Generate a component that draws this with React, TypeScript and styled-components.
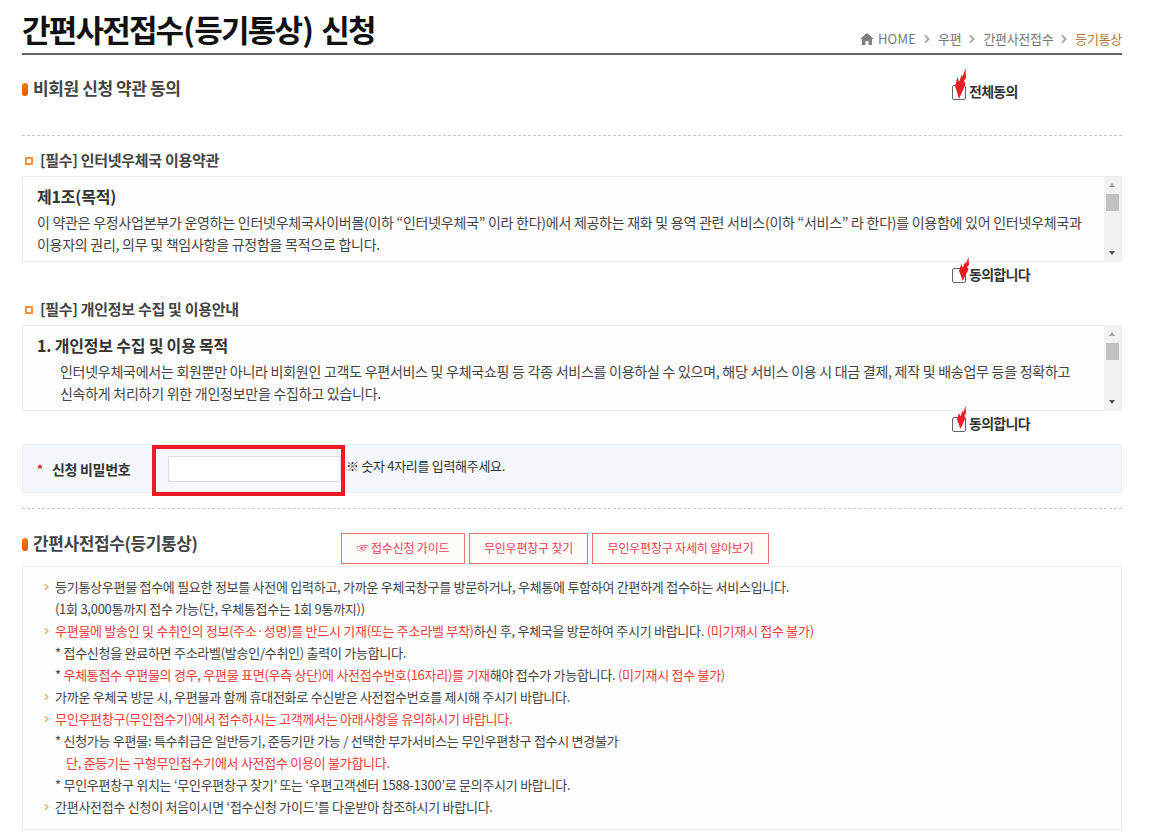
import React from "react";
import styled, { createGlobalStyle } from "styled-components";

const Global = createGlobalStyle`
  html, body { margin: 0; padding: 0; background: #fff; overflow: hidden; }
  body { font-family: "Noto Sans CJK KR", "Noto Sans", sans-serif; color: #444; word-break: keep-all; }
`;
const Page = styled.div`
  width: 1100px;
  margin-left: 22px;
  height: 838px;
  overflow: hidden;
`;
const Header = styled.header`
  height: 53px;
  border-bottom: 2px solid #666;
  display: flex;
  justify-content: space-between;
  align-items: flex-start;
`;
const Title = styled.h1`
  margin: 7px 0 0;
  font-size: 31px;
  line-height: 44px;
  font-weight: 700;
  letter-spacing: -1.8px;
  word-spacing: 3px;
  color: #111;
`;
const Paren = styled.span`
  padding: 0 1px;
`;
const Crumbs = styled.nav`
  margin-top: 29px;
  display: flex;
  align-items: center;
  font-size: 13px;
  line-height: 20px;
  letter-spacing: -0.3px;
  color: #777;
`;
const HomeText = styled.span`
  letter-spacing: 0.2px;
`;
const CrumbSep = styled.span`
  margin: 0 8px 0 8px;
  width: 6px;
  height: 8px;
  display: inline-flex;
`;
const Current = styled.span`
  color: #b5773c;
`;
const SectionRow = styled.div`
  height: 40px;
  margin-top: 21px;
  display: flex;
  position: relative;
`;
const SectionTitle = styled.h2<{ $top?: number }>`
  margin: ${(p) => p.$top ?? 0}px 0 0;
  padding-left: 11px;
  position: relative;
  font-size: 17px;
  line-height: 24px;
  font-weight: 700;
  letter-spacing: -0.4px;
  color: #444;
  white-space: nowrap;
  &::before {
    content: "";
    position: absolute;
    left: 0;
    top: 7px;
    width: 6px;
    height: 13px;
    border-radius: 3px;
    background: linear-gradient(#f57c00, #e25a00);
  }
`;
const Agree = styled.label<{ $top: number }>`
  position: absolute;
  left: 930px;
  top: ${(p) => p.$top}px;
  display: flex;
  align-items: flex-start;
  font-size: 14px;
  font-weight: 700;
  letter-spacing: -0.7px;
  color: #333;
  line-height: 13px;
`;
const Check = styled.span`
  display: block;
  width: 12px;
  height: 13px;
  border: 1px solid #666;
  border-radius: 2px;
  background: #fff;
  margin-right: 3px;
  position: relative;
`;
const Flame = styled.svg<{ $left: number; $top: number; $w: number; $h: number }>`
  position: absolute;
  left: ${(p) => p.$left}px;
  top: ${(p) => p.$top}px;
  width: ${(p) => p.$w}px;
  height: ${(p) => p.$h}px;
`;
const Dotted = styled.hr<{ $top: number }>`
  margin: ${(p) => p.$top}px 0 0;
  border: 0;
  border-top: 1px dashed #c8c8c8;
`;
const SubTitle = styled.h3<{ $top: number }>`
  margin: ${(p) => p.$top}px 0 0;
  padding-left: 18px;
  position: relative;
  font-size: 15px;
  line-height: 20px;
  font-weight: 700;
  letter-spacing: -0.3px;
  color: #444;
  &::before {
    content: "";
    position: absolute;
    left: 3px;
    top: 7px;
    width: 4px;
    height: 4px;
    border: 2px solid #f5923e;
  }
`;
const TermsBox = styled.div`
  margin-top: 6px;
  height: 84px;
  border: 1px solid #eee;
  background: #fdfdfd;
  display: flex;
`;
const TermsText = styled.div`
  flex: 1;
  padding: 7px 0 0 14px;
  overflow: hidden;
  font-size: 14px;
  line-height: 22px;
  letter-spacing: -0.26px;
  color: #444;
`;
const TermsHead = styled.div`
  margin-bottom: 3px;
  font-size: 16px;
  line-height: 24px;
  font-weight: 700;
  letter-spacing: -0.2px;
  color: #333;
`;
const Indent = styled.div`
  padding-left: 23px;
`;
const Scrollbar = styled.div`
  width: 17px;
  background: #f1f1f1;
  position: relative;
  flex: none;
`;
const Thumb = styled.div`
  position: absolute;
  left: 2px;
  right: 2px;
  top: 17px;
  height: 17px;
  background: #c1c1c1;
`;
const ArrowUp = styled.div`
  position: absolute;
  left: 5px;
  top: 6px;
  width: 0;
  height: 0;
  border: 3.5px solid transparent;
  border-top: 0;
  border-bottom: 4px solid #a3a3a3;
`;
const ArrowDown = styled.div`
  position: absolute;
  left: 5px;
  bottom: 6px;
  width: 0;
  height: 0;
  border: 3.5px solid transparent;
  border-bottom: 0;
  border-top: 4px solid #505050;
`;
const AgreeRow = styled.div`
  height: 24px;
  position: relative;
`;
const PasswordRow = styled.div`
  margin-top: 9px;
  height: 47px;
  border: 1px solid #eaeef2;
  background: #f4f8fd;
  display: flex;
  align-items: center;
  position: relative;
`;
const Star = styled.span`
  color: #e02020;
  font-size: 12px;
  margin-left: 14px;
  width: 15px;
  font-weight: 700;
`;
const PwLabel = styled.span`
  width: 116px;
  font-size: 14px;
  font-weight: 700;
  letter-spacing: -0.3px;
  color: #333;
`;
const PwInput = styled.input`
  width: 171px;
  height: 24px;
  padding: 0;
  border: 1px solid #dcdfe2;
  background: #fff;
  box-sizing: content-box;
  outline: 0;
`;
const PwHint = styled.span`
  margin-left: 5px;
  font-size: 13px;
  letter-spacing: -0.3px;
  color: #333;
  position: relative;
  top: -3px;
`;
const Highlight = styled.div`
  position: absolute;
  left: 129px;
  top: 0;
  width: 185px;
  height: 43px;
  border: 4px solid #ed1c24;
  pointer-events: none;
`;
const GuideHead = styled.div`
  margin-top: 12px;
  height: 43px;
  display: flex;
`;
const Buttons = styled.div`
  margin-left: 144px;
  margin-top: 12px;
  display: flex;
  gap: 4px;
`;
const GuideBtn = styled.a`
  height: 29px;
  padding: 0 14.25px;
  border: 1px solid #e57373;
  background: #fffcf8;
  color: #f0405a;
  font-size: 12px;
  line-height: 28px;
  letter-spacing: -0.2px;
  display: block;
`;
const InfoBox = styled.div`
  margin-top: 2px;
  border: 1px solid #eee;
  background: #fdfdfd;
  padding: 9px 0 11px 21px;
  height: 242px;
  font-size: 13px;
  line-height: 22px;
  letter-spacing: -0.27px;
  color: #444;
  white-space: nowrap;
`;
const Line = styled.div<{ $pad?: number }>`
  padding-left: ${(p) => p.$pad ?? 11}px;
  position: relative;
  height: 22px;
`;
const Bullet = styled.svg`
  position: absolute;
  left: 0;
  top: 8px;
  width: 5px;
  height: 6px;
`;
const Red = styled.span`
  color: #f23c3c;
`;

const flamePath = "M10.5 0 L11 10 L9 13 L10.5 16 L8 22 L4 31 L2 24 L0 18 L2.5 9 L4 14 L7 6 L7.5 9 Z";

const Box = ({ left, top, w, h }: { left: number; top: number; w: number; h: number }) => (
  <Check>
    <Flame $left={left} $top={top} $w={w} $h={h} viewBox="0 0 11 31" preserveAspectRatio="none">
      <path d={flamePath} fill="#ed1c24" />
    </Flame>
  </Check>
);
const Home = () => (
  <svg width="14" height="12" viewBox="0 0 14 12" style={{ marginRight: 4 }}>
    <path d="M7 0 L14 6 H12 V12 H8.5 V8 H5.5 V12 H2 V6 H0 Z" fill="#808080" />
  </svg>
);
const Chev = () => (
  <svg width="6" height="8" viewBox="0 0 6 8">
    <path d="M0 0 H2 L6 4 L2 8 H0 L3 4 Z" fill="#aaa" />
  </svg>
);
const Mark = () => (
  <Bullet viewBox="0 0 6 8" preserveAspectRatio="none">
    <path d="M0 0 H2 L6 4 L2 8 H0 L3 4 Z" fill="#e8b27a" />
  </Bullet>
);
const Bar = () => (
  <Scrollbar><ArrowUp /><Thumb /><ArrowDown /></Scrollbar>
);

export default function App() {
  return (
    <Page>
      <Global />
      <Header>
        <Title>간편사전접수<Paren>(</Paren>등기통상<Paren>)</Paren> 신청</Title>
        <Crumbs>
          <Home />
          <HomeText>HOME</HomeText>
          <CrumbSep><Chev /></CrumbSep>
          우편
          <CrumbSep><Chev /></CrumbSep>
          간편사전접수
          <CrumbSep><Chev /></CrumbSep>
          <Current>등기통상</Current>
        </Crumbs>
      </Header>
      <SectionRow>
        <SectionTitle>비회원 신청 약관 동의</SectionTitle>
        <Agree $top={9}><Box left={2} top={-18} w={11} h={31} />전체동의</Agree>
      </SectionRow>
      <Dotted $top={19} />
      <SubTitle $top={14}>[필수] 인터넷우체국 이용약관</SubTitle>
      <TermsBox>
        <TermsText>
          <TermsHead>제1조(목적)</TermsHead>
          이 약관은 우정사업본부가 운영하는 인터넷우체국사이버몰(이하 “인터넷우체국” 이라 한다)에서 제공하는 재화 및 용역 관련 서비스(이하 “서비스” 라 한다)를 이용함에 있어 인터넷우체국과 이용자의 권리, 의무 및 책임사항을 규정함을 목적으로 합니다.
        </TermsText>
        <Bar />
      </TermsBox>
      <AgreeRow><Agree $top={6}><Box left={6} top={-12} w={10} h={24} />동의합니다</Agree></AgreeRow>
      <SubTitle $top={13}>[필수] 개인정보 수집 및 이용안내</SubTitle>
      <TermsBox>
        <TermsText>
          <TermsHead>1. 개인정보 수집 및 이용 목적</TermsHead>
          <Indent>
            인터넷우체국에서는 회원뿐만 아니라 비회원인 고객도 우편서비스 및 우체국쇼핑 등 각종 서비스를 이용하실 수 있으며, 해당 서비스 이용 시 대금 결제, 제작 및 배송업무 등을 정확하고 신속하게 처리하기 위한 개인정보만을 수집하고 있습니다.
          </Indent>
        </TermsText>
        <Bar />
      </TermsBox>
      <AgreeRow><Agree $top={6}><Box left={4} top={-12} w={9} h={23} />동의합니다</Agree></AgreeRow>
      <PasswordRow>
        <Star>*</Star>
        <PwLabel>신청 비밀번호</PwLabel>
        <PwInput type="text" aria-label="신청 비밀번호" />
        <PwHint>※ 숫자 4자리를 입력해주세요.</PwHint>
        <Highlight />
      </PasswordRow>
      <Dotted $top={15} />
      <GuideHead>
        <SectionTitle $top={10}>간편사전접수(등기통상)</SectionTitle>
        <Buttons>
          <GuideBtn>☞ 접수신청 가이드</GuideBtn>
          <GuideBtn>무인우편창구 찾기</GuideBtn>
          <GuideBtn>무인우편창구 자세히 알아보기</GuideBtn>
        </Buttons>
      </GuideHead>
      <InfoBox>
        <Line><Mark />등기통상우편물 접수에 필요한 정보를 사전에 입력하고, 가까운 우체국창구를 방문하거나, 우체통에 투함하여 간편하게 접수하는 서비스입니다.</Line>
        <Line>(1회 3,000통까지 접수 가능(단, 우체통접수는 1회 9통까지))</Line>
        <Line><Mark /><Red>우편물에 발송인 및 수취인의 정보(주소·성명)를 반드시 기재(또는 주소라벨 부착)</Red>하신 후, 우체국을 방문하여 주시기 바랍니다. <Red>(미기재시 접수 불가)</Red></Line>
        <Line>* 접수신청을 완료하면 주소라벨(발송인/수취인) 출력이 가능합니다.</Line>
        <Line>* <Red>우체통접수 우편물의 경우, 우편물 표면(우측 상단)에 사전접수번호(16자리)를 기재</Red>해야 접수가 가능합니다. <Red>(미기재시 접수 불가)</Red></Line>
        <Line><Mark />가까운 우체국 방문 시, 우편물과 함께 휴대전화로 수신받은 사전접수번호를 제시해 주시기 바랍니다.</Line>
        <Line><Mark /><Red>무인우편창구(무인접수기)에서 접수하시는 고객께서는 아래사항을 유의하시기 바랍니다.</Red></Line>
        <Line>* 신청가능 우편물: 특수취급은 일반등기, 준등기만 가능 / 선택한 부가서비스는 무인우편창구 접수시 변경불가</Line>
        <Line $pad={22}><Red>단, 준등기는 구형무인접수기에서 사전접수 이용이 불가합니다.</Red></Line>
        <Line>* 무인우편창구 위치는 ‘무인우편창구 찾기’ 또는 ‘우편고객센터 1588-1300’로 문의주시기 바랍니다.</Line>
        <Line><Mark />간편사전접수 신청이 처음이시면 ‘접수신청 가이드’를 다운받아 참조하시기 바랍니다.</Line>
      </InfoBox>
    </Page>
  );
}
